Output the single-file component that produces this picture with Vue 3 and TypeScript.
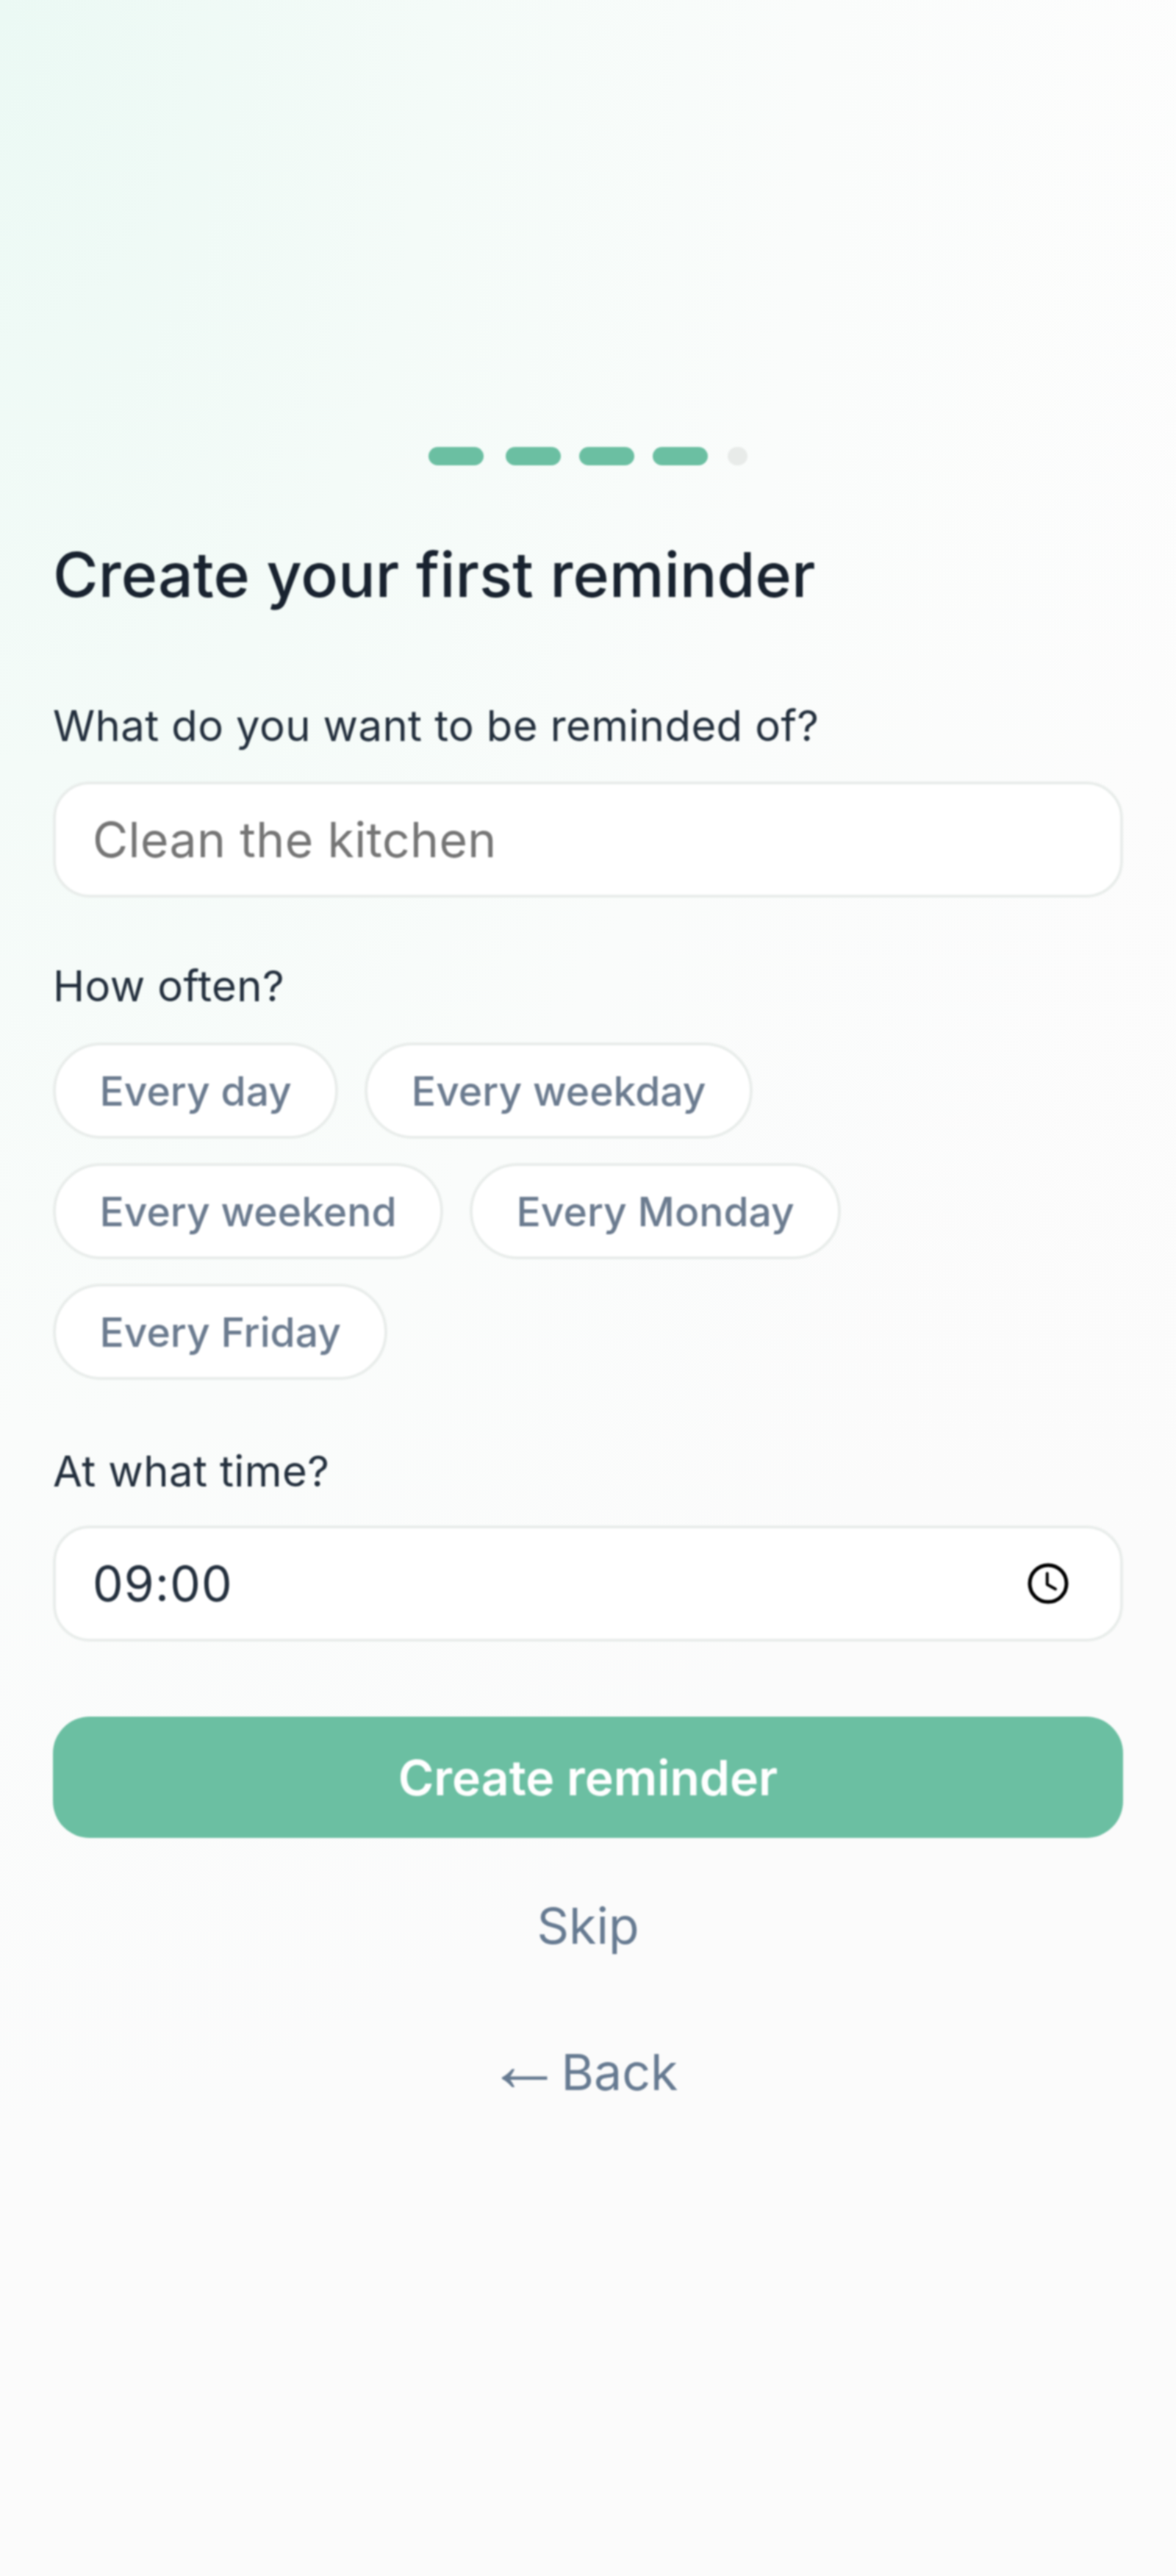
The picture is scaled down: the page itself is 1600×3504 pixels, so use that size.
<script setup lang="ts">
const chipRows: string[] = ['Every day', 'Every weekday', 'Every weekend', 'Every Monday', 'Every Friday']
const steps: boolean[] = [true, true, true, true, false]
</script>

<template>
  <main class="page">
    <div class="content">
      <div class="steps">
        <span v-for="(done, i) in steps" :key="i" class="step" :class="{ done }"></span>
      </div>
      <h1 class="title">Create your first reminder</h1>

      <label class="label first">What do you want to be reminded of?</label>
      <input class="field-input" type="text" placeholder="Clean the kitchen" />

      <label class="label often">How often?</label>
      <div class="chips">
        <button v-for="c in chipRows" :key="c" class="chip" type="button">{{ c }}</button>
      </div>

      <label class="label time">At what time?</label>
      <div class="time-field">
        <input class="time-input" type="text" value="09:00" />
        <svg class="clock" viewBox="0 0 24 24" fill="none" stroke="#000" stroke-width="2" aria-hidden="true">
          <circle cx="12" cy="12" r="10" />
          <path d="M11.5 6.5v6l4.5 2.5" stroke-width="1.6" stroke-linecap="round" stroke-linejoin="round" />
        </svg>
      </div>

      <button class="primary" type="button">Create reminder</button>
      <button class="link skip" type="button">Skip</button>
      <button class="link back" type="button"><span class="arrow">←</span><span>Back</span></button>
    </div>
  </main>
</template>

<style>
html, body { margin: 0; padding: 0; }
</style>

<style scoped>
.page {
  width: 1600px;
  height: 3504px;
  background:
    radial-gradient(ellipse 1700px 3000px at 0 0, #ebf9f4 0%, #f4fbf8 35%, #fafcfb 65%, rgba(251, 251, 251, 0) 100%),
    linear-gradient(180deg, #fdfdfd 0%, #fbfbfb 60%);
  font-family: Inter, "Noto Sans", sans-serif;
  overflow: hidden;
}
.content {
  padding: 608px 72px 0;
  display: flex;
  flex-direction: column;
  filter: blur(1px);
}
.steps {
  display: flex;
  justify-content: center;
  gap: 25px;
  height: 25px;
}
.step {
  width: 27px;
  height: 25px;
  border-radius: 13px;
  background: #e8ebe9;
}
.step.done {
  width: 75px;
  background: #6bbfa2;
}
.step:nth-child(1) { margin-right: 5px; }
.step:nth-child(4) { margin-right: 2px; }
.title {
  margin: 100px 0 0;
  font-size: 84px;
  line-height: 98px;
  letter-spacing: 0.1px;
  font-weight: 500;
  color: #18222f;
}
.label {
  display: block;
  font-size: 58px;
  line-height: 68px;
  letter-spacing: 0.4px;
  font-weight: 400;
  color: #232f3d;
}
.label.first { margin-top: 122px; }
.label.often { margin-top: 86px; }
.label.time { margin-top: 90px; }
.field-input,
.time-field {
  box-sizing: border-box;
  width: 100%;
  height: 158px;
  margin-top: 42px;
  background: #fff;
  border: 4px solid #e9edeb;
  border-radius: 50px;
  font-family: inherit;
  font-size: 66px;
  letter-spacing: 0.4px;
  color: #232f3d;
  outline: none;
}
.time-field { margin-top: 40px; }
.field-input {
  display: block;
  padding: 0 50px;
}
.field-input::placeholder { color: #757575; opacity: 1; }
.time-field {
  display: flex;
  align-items: center;
  padding: 0 68px 0 50px;
}
.time-input {
  flex: 1;
  min-width: 0;
  border: 0;
  padding: 0;
  background: transparent;
  font: inherit;
  letter-spacing: 1.2px;
  color: #232f3d;
  outline: none;
}
.clock {
  width: 60px;
  height: 60px;
  flex: none;
}
.chips {
  display: flex;
  flex-wrap: wrap;
  gap: 33px 36px;
  margin-top: 43px;
}
.chip {
  box-sizing: border-box;
  height: 131px;
  padding: 0 59.5px;
  background: #fff;
  border: 4px solid #e9edeb;
  border-radius: 70px;
  font-family: inherit;
  font-size: 55.2px;
  font-weight: 500;
  color: #6b7b8f;
}
.primary {
  box-sizing: border-box;
  width: 100%;
  height: 165px;
  margin-top: 102px;
  border: 0;
  border-radius: 50px;
  background: #6bbfa2;
  color: #fff;
  font-family: inherit;
  font-size: 66px;
  font-weight: 600;
}
.link {
  align-self: center;
  border: 0;
  padding: 0;
  background: transparent;
  color: #667a91;
  font-family: inherit;
  font-size: 68px;
  line-height: 78px;
  font-weight: 400;
}
.arrow {
  font-family: "Liberation Sans", sans-serif;
  font-size: 104px;
  line-height: 0;
  vertical-align: -1px;
  letter-spacing: -2px;
  margin-left: -16px;
}
.skip { margin-top: 80px; }
.back { margin-top: 121px; }
</style>
